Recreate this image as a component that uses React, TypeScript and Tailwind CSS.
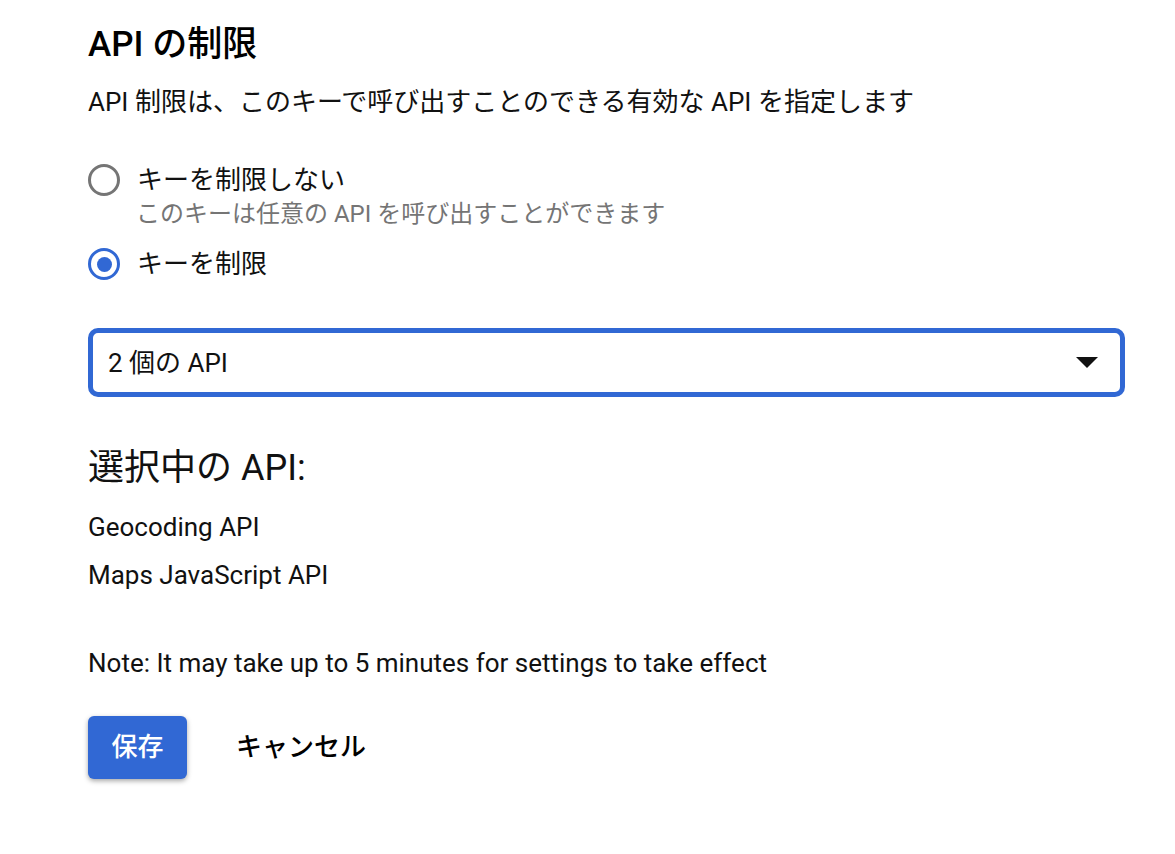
import React, { useState } from 'react';

const font = { fontFamily: 'Roboto, "Noto Sans CJK JP", sans-serif' };

function Radio({ checked }: { checked: boolean }) {
  return checked ? (
    <span className="flex h-[32px] w-[32px] shrink-0 items-center justify-center rounded-full border-[3px] border-[#3168d4]">
      <span className="h-[15px] w-[15px] rounded-full bg-[#3168d4]" />
    </span>
  ) : (
    <span className="h-[32px] w-[32px] shrink-0 rounded-full border-[3px] border-[#757575]" />
  );
}

export default function App() {
  const [restricted, setRestricted] = useState(true);
  const apis = ['Geocoding API', 'Maps JavaScript API'];

  return (
    <div className="min-h-screen bg-white text-[#111]" style={font}>
      <div className="w-[1037px] ml-[88px] pt-[23px]">
        {/* Header */}
        <h1 className="text-[35px] leading-[44px] font-medium text-black">API の制限</h1>
        <p className="mt-[17px] text-[26px] leading-[36px]">
          API 制限は、このキーで呼び出すことのできる有効な API を指定します
        </p>

        {/* Radios */}
        <div className="mt-[42px]">
          <button className="flex h-[36px] items-center gap-[17px]" onClick={() => setRestricted(false)}>
            <Radio checked={!restricted} />
            <span className="text-[26px] leading-[36px]">キーを制限しない</span>
          </button>
          <p className="ml-[48px] mt-px text-[24px] leading-[30px] text-[#757575]">
            このキーは任意の API を呼び出すことができます
          </p>
          <button className="mt-[17px] flex h-[36px] items-center gap-[17px]" onClick={() => setRestricted(true)}>
            <Radio checked={restricted} />
            <span className="text-[26px] leading-[36px]">キーを制限</span>
          </button>
        </div>

        {/* Dropdown */}
        <div className="mt-[46px] flex h-[69px] items-center justify-between rounded-[10px] border-[5px] border-[#3168d4] pl-[15px] pr-[22px]">
          <span className="text-[26px] leading-[36px]">2 個の API</span>
          <svg width="22" height="11" viewBox="0 0 22 11">
            <polygon points="0,0 22,0 11,11" fill="#111" />
          </svg>
        </div>

        {/* Selected */}
        <h2 className="mt-[47px] text-[36px] leading-[48px]">選択中の API:</h2>
        <ul className="mt-[11px]">
          {apis.map((a) => (
            <li key={a} className="text-[26px] leading-[48px]">{a}</li>
          ))}
        </ul>

        <p className="mt-[46px] text-[26px] leading-[36px]">
          Note: It may take up to 5 minutes for settings to take effect
        </p>

        {/* Actions */}
        <div className="mt-[35px] flex items-center gap-[49px]">
          <button className="h-[63px] w-[99px] rounded-[6px] bg-[#3168d4] text-[26px] font-medium text-white shadow-[0_2px_5px_rgba(0,0,0,0.35)]">
            保存
          </button>
          <button className="text-[26px] font-medium text-black">キャンセル</button>
        </div>
      </div>
    </div>
  );
}
